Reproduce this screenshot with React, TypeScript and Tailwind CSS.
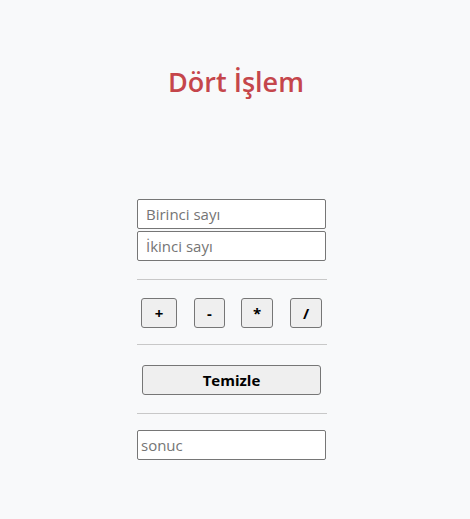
import React from 'react';

const App: React.FC = () => {
    return (
        <div className="min-h-[519px] bg-[#f8f9fa] font-['Open_Sans',sans-serif]">
            <h1 className="pt-[62px] text-center text-[27px] leading-[40px] font-semibold text-[#c5464b] pl-[2px]">
                Dört İşlem
            </h1>

            <div className="ml-[137px] mt-[97px] w-[190px] flex flex-col">
                <input
                    placeholder="Birinci sayı"
                    className="h-[30px] w-[189px] bg-white border border-[#767676] rounded-[2px] px-[8px] text-[15px] placeholder:text-[#757575] outline-none"
                />
                <input
                    placeholder="İkinci sayı"
                    className="mt-[2px] h-[30px] w-[189px] bg-white border border-[#767676] rounded-[2px] px-[8px] text-[15px] placeholder:text-[#757575] outline-none"
                />

                <hr className="mt-[18px] border-t border-[#c8c8c8]" />

                <div className="mt-[18px] flex pl-[4px]">
                    <button className="h-[30px] w-[36px] bg-[#efefef] border border-[#767676] rounded-[3px] text-[15px] font-bold text-black">+</button>
                    <button className="ml-[17px] h-[30px] w-[31px] bg-[#efefef] border border-[#767676] rounded-[3px] text-[15px] font-bold text-black">-</button>
                    <button className="ml-[16px] h-[30px] w-[32px] bg-[#efefef] border border-[#767676] rounded-[3px] text-[15px] font-bold text-black">*</button>
                    <button className="ml-[17px] h-[30px] w-[32px] bg-[#efefef] border border-[#767676] rounded-[3px] text-[15px] font-bold text-black">/</button>
                </div>

                <hr className="mt-[16px] border-t border-[#c8c8c8]" />

                <button className="mt-[20px] ml-[5px] h-[30px] w-[179px] bg-[#efefef] border border-[#767676] rounded-[3px] text-[15px] font-bold text-black">
                    Temizle
                </button>

                <hr className="mt-[18px] border-t border-[#c8c8c8]" />

                <input
                    placeholder="sonuc"
                    className="mt-[16px] h-[30px] w-[189px] bg-white border border-[#767676] rounded-[2px] px-[3px] text-[15px] placeholder:text-[#757575] outline-none"
                />
            </div>
        </div>
    );
};

export default App;
